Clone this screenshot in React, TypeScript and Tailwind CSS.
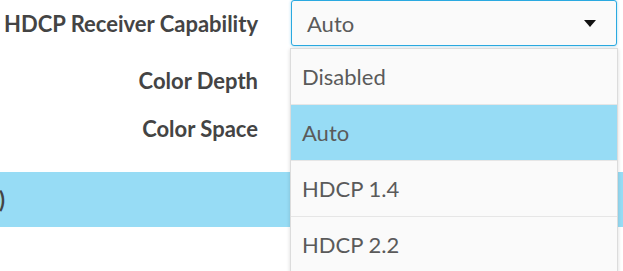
const options = ['Disabled', 'Auto', 'HDCP 1.4', 'HDCP 2.2']

function Row({ label, className = '' }: { label: string; className?: string }) {
  return (
    <div className={`flex h-[48px] items-center ${className}`}>
      <div className="w-[258px] text-right text-[22px] font-bold text-[#444]">{label}</div>
    </div>
  )
}

export default function App() {
  const selected = 'Auto'

  return (
    <div className="relative h-[271px] w-[623px] overflow-hidden bg-white font-['Lato',sans-serif]">
      <div className="flex h-[48px] items-start">
        <div className="flex h-[46px] w-[291px] items-center">
          <div className="w-[258px] whitespace-nowrap text-right text-[22px] font-bold text-[#444]">
            HDCP Receiver Capability
          </div>
        </div>
        <div className="flex h-[46px] w-[326px] items-center justify-between rounded-[3px] border border-[#2aa9e0] bg-[#fafafa] pl-[15px] pr-[20px] shadow-[0_0_3px_rgba(42,169,224,0.45)]">
          <span className="text-[22px] text-[#5a5a5a]">{selected}</span>
          <svg width="12" height="7" viewBox="0 0 12 7">
            <path d="M0 0 L12 0 L6 7 Z" fill="#111" />
          </svg>
        </div>
      </div>

      <Row label="Color Depth" className="mt-[8px]" />
      <Row label="Color Space" />

      <div className="mt-[20px] flex h-[55px] items-center bg-[#97dcf5]">
        <span className="ml-[-1px] text-[22px] font-bold text-[#444]">)</span>
      </div>

      <div className="absolute left-[290px] top-[48px] w-[328px] border border-[#dcdcdc] bg-[#fafafa] shadow-[0_1px_4px_rgba(0,0,0,0.15)]">
        {options.map(o => (
          <div
            key={o}
            className={`flex h-[56px] items-center border-b border-[#e6e6e6] pl-[11px] text-[22px] text-[#5a5a5a] ${
              o === selected ? 'bg-[#97dcf5]' : ''
            }`}
          >
            {o}
          </div>
        ))}
      </div>
    </div>
  )
}
